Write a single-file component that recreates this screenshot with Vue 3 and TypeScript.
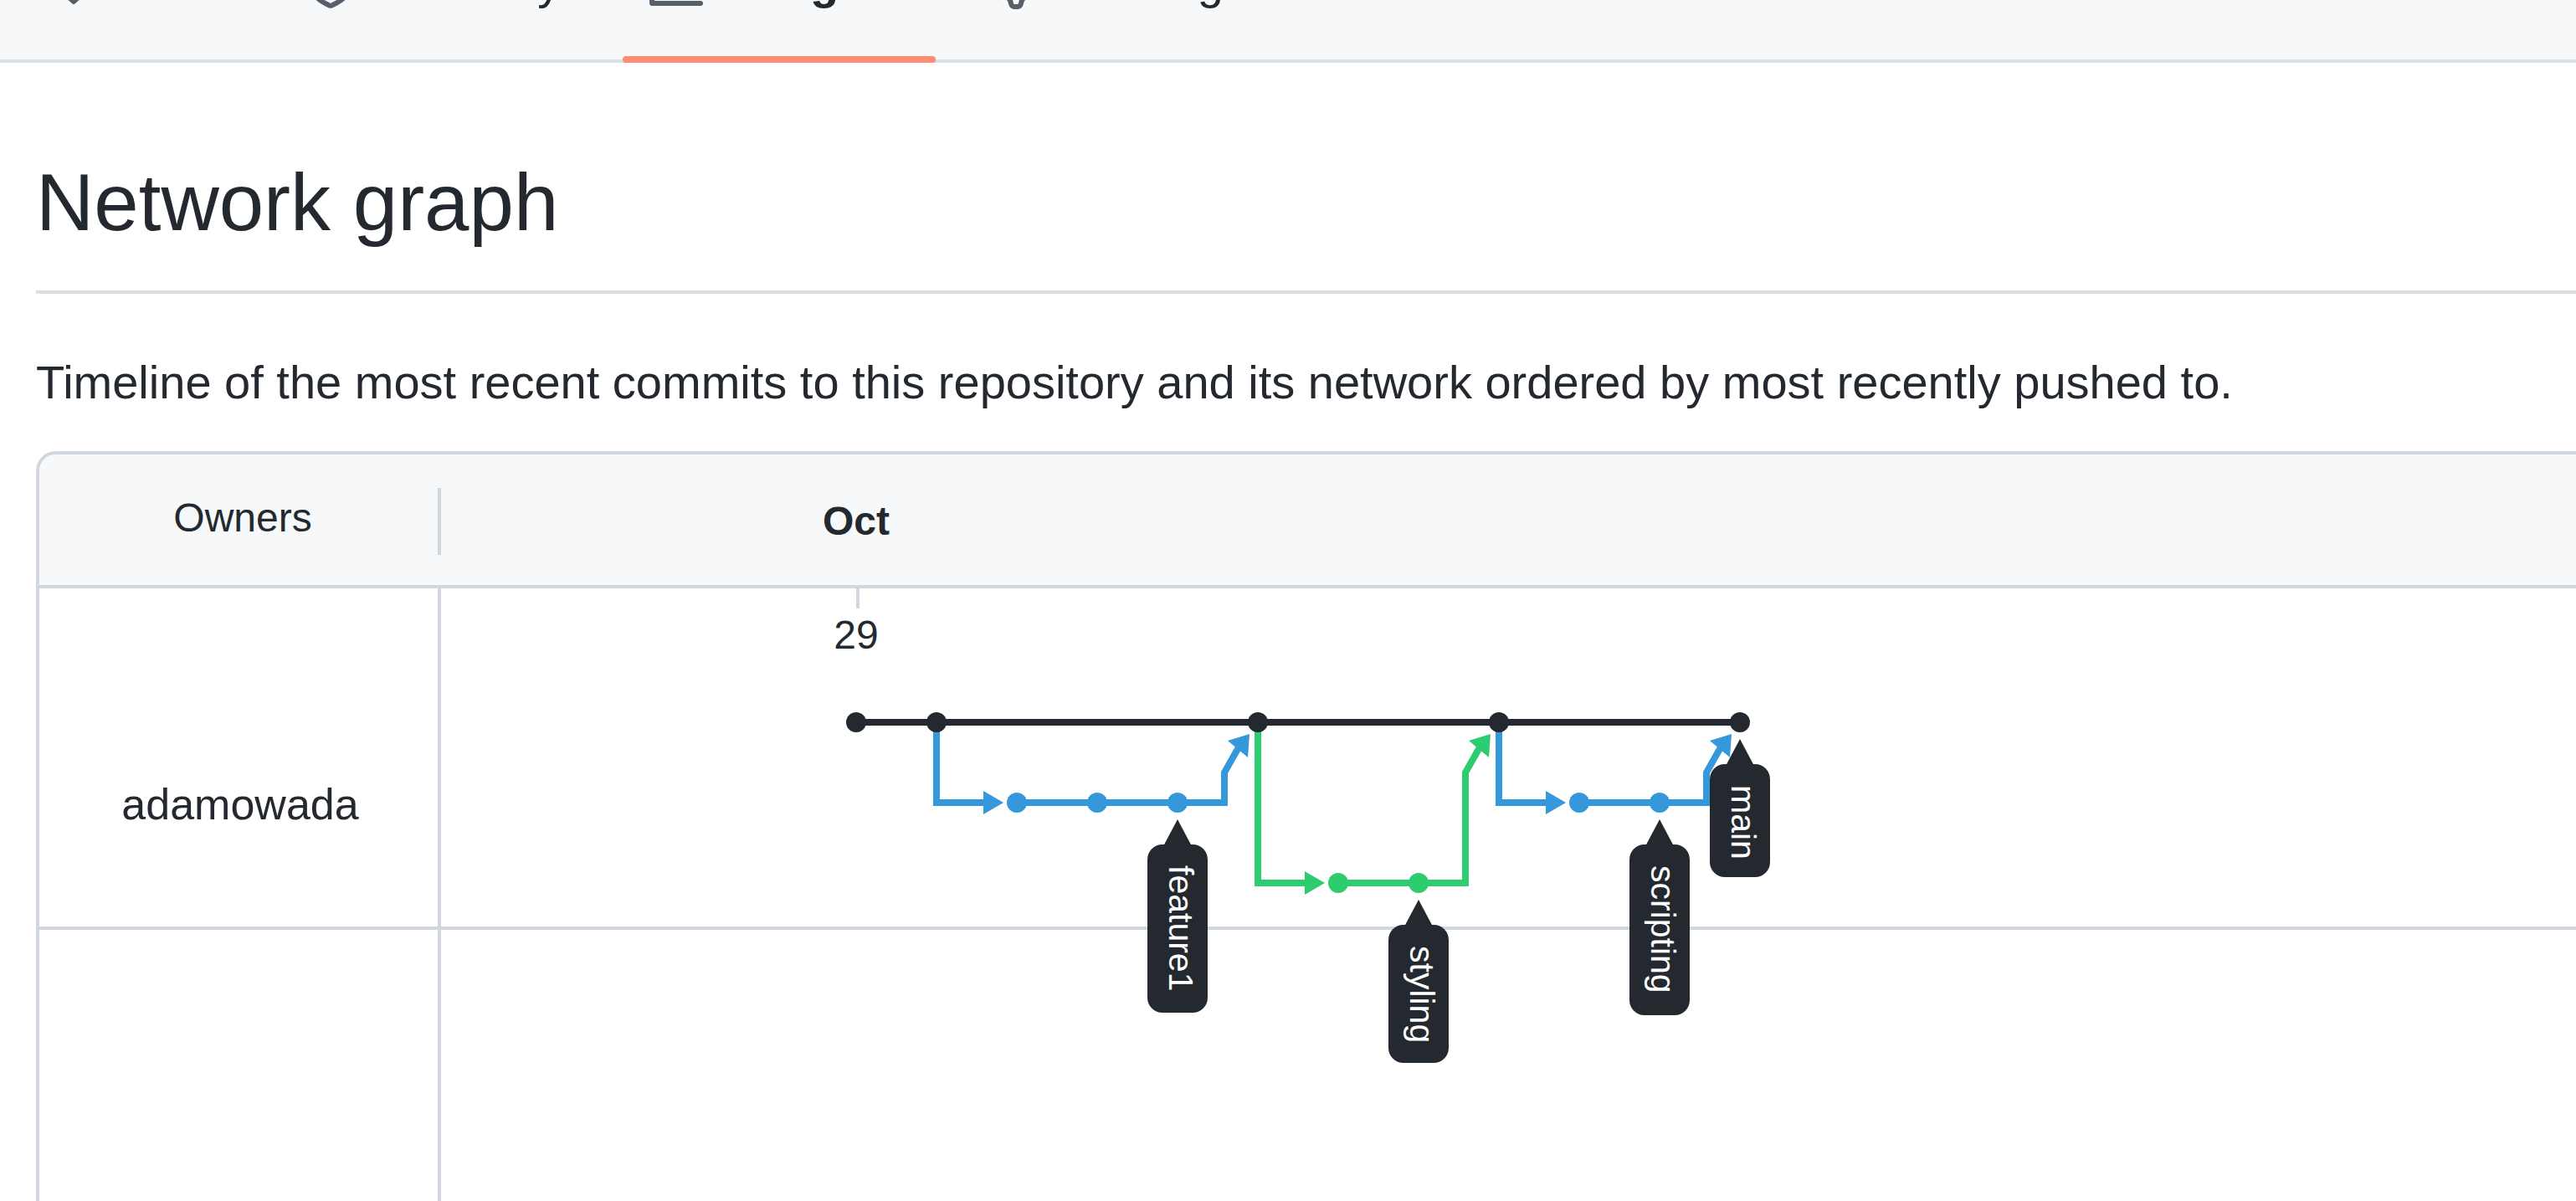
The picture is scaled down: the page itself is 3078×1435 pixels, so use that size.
<script setup lang="ts">
interface Tab { label: string; icon: string; selected?: boolean }
interface Dot { x: number; y: number; color: string }
interface Branch { color: string; line: string; arrows: string }
interface Label { name: string; x: number; y: number; height: number }

const ink = '#24292f'
const blue = '#3498db'
const green = '#2ecc71'
const step = 96
const rows = [160, 256, 352]

const tabs: Tab[] = [
  { label: 'Wiki', icon: 'M0 1.75A.75.75 0 01.75 1h4.253c1.227 0 2.317.59 3 1.501A3.744 3.744 0 0111.006 1h4.245a.75.75 0 01.75.75v10.5a.75.75 0 01-.75.75h-4.507a2.25 2.25 0 00-1.591.659l-.622.621a.75.75 0 01-1.06 0l-.622-.621A2.25 2.25 0 005.258 13H.75a.75.75 0 01-.75-.75V1.75zm8.755 3a2.25 2.25 0 012.25-2.25H14.5v9h-3.757c-.71 0-1.4.201-1.992.572l.004-7.322zm-1.504 7.324l.004-5.073-.002-2.253A2.25 2.25 0 005.003 2.5H1.5v9h3.757a3.75 3.75 0 011.994.574z' },
  { label: 'Security', icon: 'M7.467.133a1.75 1.75 0 011.066 0l5.25 1.68A1.75 1.75 0 0115 3.48V7c0 1.566-.32 3.182-1.303 4.682-.983 1.498-2.585 2.813-5.032 3.855a1.7 1.7 0 01-1.33 0c-2.447-1.042-4.049-2.357-5.032-3.855C1.32 10.182 1 8.566 1 7V3.48a1.75 1.75 0 011.217-1.667l5.25-1.68zm.61 1.429a.25.25 0 00-.153 0l-5.25 1.68a.25.25 0 00-.174.238V7c0 1.358.275 2.666 1.057 3.86.784 1.194 2.121 2.34 4.366 3.297a.2.2 0 00.154 0c2.245-.956 3.582-2.104 4.366-3.298C13.225 9.666 13.5 8.36 13.5 7V3.48a.25.25 0 00-.174-.237l-5.25-1.68z' },
  { label: 'Insights', selected: true, icon: 'M1.5 1.75a.75.75 0 00-1.5 0v12.5c0 .414.336.75.75.75h14.5a.75.75 0 000-1.5H1.5V1.75zm14.28 2.53a.75.75 0 00-1.06-1.06L10 7.94 7.53 5.47a.75.75 0 00-1.06 0L3.22 8.72a.75.75 0 001.06 1.06L7 7.06l2.47 2.47a.75.75 0 001.06 0l5.25-5.25z' },
  { label: 'Settings', icon: 'M7.429 1.525a6.593 6.593 0 011.142 0c.036.003.108.036.137.146l.289 1.105c.147.56.55.967.997 1.189.174.086.341.183.501.29.417.278.97.423 1.53.27l1.102-.303c.11-.03.175.016.195.046.219.31.41.641.573.989.014.031.022.11-.059.19l-.815.806c-.411.406-.562.957-.53 1.456a4.588 4.588 0 010 .582c-.032.499.119 1.05.53 1.456l.815.806c.08.08.073.159.059.19a6.494 6.494 0 01-.573.99c-.02.029-.086.074-.195.045l-1.103-.303c-.559-.153-1.112-.008-1.529.27-.16.107-.327.204-.5.29-.449.222-.851.628-.998 1.189l-.289 1.105c-.029.11-.101.143-.137.146a6.613 6.613 0 01-1.142 0c-.036-.003-.108-.037-.137-.146l-.289-1.105c-.147-.56-.55-.967-.997-1.189a4.502 4.502 0 01-.501-.29c-.417-.278-.97-.423-1.53-.27l-1.102.303c-.11.03-.175-.016-.195-.046a6.492 6.492 0 01-.573-.989c-.014-.031-.022-.11.059-.19l.815-.806c.411-.406.562-.957.53-1.456a4.587 4.587 0 010-.582c.032-.499-.119-1.05-.53-1.456l-.815-.806c-.08-.08-.073-.159-.059-.19a6.44 6.44 0 01.573-.99c.02-.029.086-.075.195-.045l1.103.303c.559.153 1.112.008 1.529-.27.16-.107.327-.204.5-.29.449-.222.851-.628.998-1.189l.289-1.105c.029-.11.101-.143.137-.146zM8 0c-.236 0-.47.01-.701.03-.743.065-1.29.615-1.458 1.261l-.29 1.106c-.017.066-.078.158-.211.224a5.994 5.994 0 00-.668.386c-.123.082-.233.09-.3.071L3.27 2.776c-.644-.177-1.392.02-1.82.63a7.977 7.977 0 00-.704 1.217c-.315.675-.111 1.422.363 1.891l.815.806c.05.048.098.147.088.294a6.084 6.084 0 000 .772c.01.147-.038.246-.088.294l-.815.806c-.474.469-.678 1.216-.363 1.891.2.428.436.835.704 1.218.428.609 1.176.806 1.82.63l1.103-.303c.066-.019.176-.011.299.071.213.143.436.272.668.386.133.066.194.158.212.224l.289 1.106c.169.646.715 1.196 1.458 1.26a8.094 8.094 0 001.402 0c.743-.064 1.29-.614 1.458-1.26l.29-1.106c.017-.066.078-.158.211-.224a5.98 5.98 0 00.668-.386c.123-.082.233-.09.3-.071l1.102.302c.644.177 1.392-.02 1.82-.63.268-.382.505-.789.704-1.217.315-.675.111-1.422-.364-1.891l-.814-.806c-.05-.048-.098-.147-.088-.294a6.1 6.1 0 000-.772c-.01-.147.039-.246.088-.294l.814-.806c.475-.469.679-1.216.364-1.891a7.992 7.992 0 00-.704-1.218c-.428-.609-1.176-.806-1.82-.63l-1.103.303c-.066.019-.176.011-.299-.071a5.991 5.991 0 00-.668-.386c-.133-.066-.194-.158-.212-.224L10.16 1.29C9.99.645 9.444.095 8.701.031A8.094 8.094 0 008 0zm1.5 8a1.5 1.5 0 11-3 0 1.5 1.5 0 013 0zM11 8a3 3 0 11-6 0 3 3 0 016 0z' },
]

// Column n of the timeline, measured from the left edge of the graph pane.
const col = (n: number): number => 496 + n * step

// A branch leaves main at one column and merges back at a later one.
function branch(from: number, to: number, row: number, color: string): Branch {
  const x = col(from)
  const end = col(to)
  const top = rows[0]
  const y = rows[row]
  return {
    color,
    line: `M${x} ${top}V${y}H${x + 58} M${col(from + 1)} ${y}H${end - 40}V${top + 60}L${end - 23} ${top + 30}`,
    arrows: `M${x + 80} ${y}l-24 -14v28z M${end - 10} ${top + 14}l-26 8l24 20z`,
  }
}

const branches: Branch[] = [
  branch(1, 5, 1, blue),
  branch(5, 8, 2, green),
  branch(8, 11, 1, blue),
]

const dots: Dot[] = [
  ...[0, 1, 5, 8, 11].map((n) => ({ x: col(n), y: rows[0], color: ink })),
  ...[2, 3, 4, 9, 10].map((n) => ({ x: col(n), y: rows[1], color: blue })),
  ...[6, 7].map((n) => ({ x: col(n), y: rows[2], color: green })),
]

const labels: Label[] = [
  { name: 'feature1', x: col(4), y: rows[1], height: 201 },
  { name: 'styling', x: col(7), y: rows[2], height: 165 },
  { name: 'scripting', x: col(10), y: rows[1], height: 204 },
  { name: 'main', x: col(11), y: rows[0], height: 135 },
]
</script>

<template>
  <div class="page">
    <nav class="tabs" aria-label="Repository">
      <a
        v-for="tab in tabs"
        :key="tab.label"
        href="#"
        class="tab"
        :class="{ selected: tab.selected }"
        :aria-current="tab.selected ? 'page' : undefined"
      >
        <svg class="tab-icon" viewBox="0 0 16 16" aria-hidden="true"><path fill-rule="evenodd" :d="tab.icon" /></svg>
        <span class="tab-label" :data-content="tab.label">{{ tab.label }}</span>
      </a>
    </nav>

    <main class="content">
      <h1 class="title">Network graph</h1>
      <p class="intro">Timeline of the most recent commits to this repository and its network ordered by most recently pushed to.</p>

      <section class="network">
        <header class="network-head">
          <div class="owners-head">Owners</div>
          <div class="months"><span class="month">Oct</span></div>
        </header>
        <div class="network-body">
          <div class="owners">
            <div class="owner">adamowada</div>
          </div>
          <div class="graph">
            <div class="graph-row"></div>
            <svg class="graph-canvas" width="1700" height="600" role="img" aria-label="Commits by branch">
              <rect :x="col(0)" y="0" width="4" height="24" fill="#d0d7de" />
              <text class="day" :x="col(0)" y="72" text-anchor="middle">29</text>
              <g v-for="(b, i) in branches" :key="i">
                <path :d="b.line" :stroke="b.color" stroke-width="8" fill="none" />
                <path :d="b.arrows" :fill="b.color" />
              </g>
              <path :d="`M${col(0)} ${rows[0]}H${col(11)}`" :stroke="ink" stroke-width="8" />
              <circle v-for="(d, i) in dots" :key="i" :cx="d.x" :cy="d.y" r="12" :fill="d.color" />
              <g v-for="l in labels" :key="l.name" :transform="`translate(${l.x} ${l.y + 20})`">
                <path d="M0 0L17 32H-17Z" :fill="ink" />
                <rect x="-36" y="30" width="72" :height="l.height" rx="18" :fill="ink" />
                <text class="branch-name" transform="translate(-10 55) rotate(90)">{{ l.name }}</text>
              </g>
            </svg>
          </div>
        </div>
      </section>
    </main>
  </div>
</template>

<style>
body {
  margin: 0;
}
</style>

<style scoped>
.page {
  box-sizing: border-box;
  display: flex;
  flex-direction: column;
  height: 100vh;
  overflow: hidden;
  background: #fff;
  color: #24292f;
  font-family: "Liberation Sans", Arial, sans-serif;
  font-size: 56px;
  line-height: 84px;
}

/* The tab bar is scrolled partly out of view. */
.tabs {
  display: flex;
  flex: none;
  gap: 32px;
  margin-top: -96px;
  padding-left: 24px;
  background: #f6f8fa;
  box-shadow: inset 0 -4px #d8dee4;
}

.tab {
  position: relative;
  display: flex;
  align-items: center;
  gap: 32px;
  padding: 33px 32px 54px;
  color: inherit;
  text-decoration: none;
}

.tab.selected {
  font-weight: 600;
}

.tab.selected::after {
  content: "";
  position: absolute;
  right: 0;
  bottom: 0;
  left: 0;
  height: 8px;
  border-radius: 4px;
  background: #fd8c73;
}

.tab-icon {
  width: 64px;
  height: 64px;
  fill: #57606a;
}

.tab-label {
  text-align: center;
}

/* Reserves the bold width so that selecting a tab does not shift the others. */
.tab-label::before {
  content: attr(data-content);
  display: block;
  height: 0;
  font-weight: 600;
  visibility: hidden;
}

.content {
  display: flex;
  flex: 1;
  flex-direction: column;
  min-height: 0;
  padding-left: 43px;
}

.title {
  margin: 95px 0 0;
  padding-bottom: 33px;
  border-bottom: 4px solid #d8dee4;
  font-size: 96px;
  font-weight: 400;
  line-height: 144px;
}

.intro {
  margin: 64px 0 40px;
}

.network {
  display: flex;
  flex: 1;
  flex-direction: column;
  min-height: 0;
  border: 4px solid #d0d7de;
  border-width: 4px 0 0 4px;
  border-top-left-radius: 24px;
  overflow: hidden;
}

.network-head {
  display: flex;
  align-items: center;
  padding: 40px 0 36px;
  border-bottom: 4px solid #d0d7de;
  background: #f6f8fa;
  font-size: 48px;
  line-height: 80px;
}

.owners-head {
  box-sizing: border-box;
  width: 480px;
  height: 80px;
  padding-left: 10px;
  border-right: 4px solid #d0d7de;
  line-height: 72px;
  text-align: center;
}

.months {
  flex: 1;
}

.month {
  display: block;
  width: 992px;
  font-weight: 600;
  text-align: center;
}

.network-body {
  display: flex;
  flex: 1;
  min-height: 0;
}

.owners {
  box-sizing: border-box;
  width: 480px;
  border-right: 4px solid #d0d7de;
}

.owner {
  box-sizing: border-box;
  height: 408px;
  padding: 218px 0 0 4px;
  border-bottom: 4px solid #d0d7de;
  font-size: 52px;
  line-height: 80px;
  text-align: center;
}

.graph {
  position: relative;
  flex: 1;
}

.graph-row {
  box-sizing: border-box;
  height: 408px;
  border-bottom: 4px solid #d0d7de;
}

.graph-canvas {
  position: absolute;
  top: 0;
  left: 0;
}

.day {
  fill: #24292f;
  font-size: 48px;
}

.branch-name {
  fill: #fff;
  font-size: 41px;
}
</style>
